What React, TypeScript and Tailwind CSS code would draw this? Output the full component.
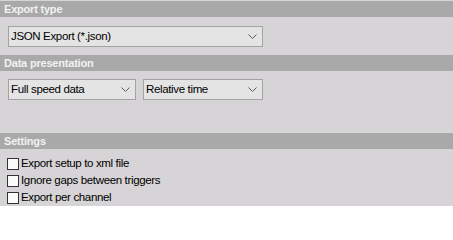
const font = { fontFamily: '"Liberation Sans", Arial, sans-serif' };

function Chevron() {
  return (
    <svg width="9" height="5" viewBox="0 0 9 5" className="shrink-0">
      <path d="M0.5 0.5 L4.5 4.5 L8.5 0.5" fill="none" stroke="#5a5a5a" strokeWidth="1" />
    </svg>
  );
}

function Combo({ label, width }: { label: string; width: string }) {
  return (
    <div
      className={`${width} h-[21px] flex items-center justify-between border border-[#a3a3a3] bg-[#e4e4e4] pl-[2px] pr-[5px] text-[11.5px] tracking-[-0.35px] text-black`}
    >
      <span>{label}</span>
      <Chevron />
    </div>
  );
}

function Header({ title }: { title: string }) {
  return (
    <div className="h-4 bg-[#a9a9a9] pl-1 text-[11px] font-bold leading-4 tracking-[-0.2px] text-[#f2f2f2]">
      {title}
    </div>
  );
}

function Check({ label }: { label: string }) {
  return (
    <div className="flex h-[17px] items-center gap-[2px] text-[11.5px] tracking-[-0.35px] text-black">
      <div className="h-[12px] w-[12px] border border-[#333] bg-[#fbfbfb]" />
      <span>{label}</span>
    </div>
  );
}

export default function App() {
  return (
    <div className="h-[206px] w-[453px] overflow-hidden bg-[#d6d4d6] pt-px" style={font}>
      <Header title="Export type" />
      <div className="px-2 pt-[9px] pb-2">
        <Combo label="JSON Export (*.json)" width="w-[255px]" />
      </div>
      <Header title="Data presentation" />
      <div className="flex gap-[7px] px-2 pt-2 pb-[33px]">
        <Combo label="Full speed data" width="w-[128px]" />
        <Combo label="Relative time" width="w-[120px]" />
      </div>
      <Header title="Settings" />
      <div className="px-[7px] pt-[6px]">
        <Check label="Export setup to xml file" />
        <Check label="Ignore gaps between triggers" />
        <Check label="Export per channel" />
      </div>
    </div>
  );
}
